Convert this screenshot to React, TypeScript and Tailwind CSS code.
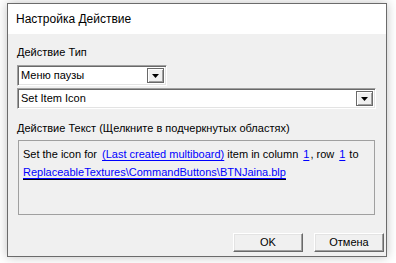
import React from 'react';

function Arrow() {
  return (
    <svg width="7" height="4" viewBox="0 0 7 4">
      <path d="M0 0h7L3.5 4z" fill="#000" />
    </svg>
  );
}

function Combo({ value, width }: { value: string; width: string }) {
  return (
    <div
      className={`${width} h-[21px] flex items-stretch bg-white border-t border-l border-[#a0a0a0] border-r border-b border-r-white border-b-white shadow-[inset_1px_1px_0_#696969,inset_-1px_-1px_0_#e3e3e3]`}
    >
      <div className="flex-1 flex items-center pl-[3px] text-[11px] text-black">{value}</div>
      <div className="w-[17px] my-[2px] mr-[2px] flex items-center justify-center bg-[#f0f0f0] border border-[#696969] shadow-[inset_1px_1px_0_#ffffff,inset_-1px_-1px_0_#a0a0a0]">
        <Arrow />
      </div>
    </div>
  );
}

function Btn({ label }: { label: string }) {
  return (
    <button className="w-[70px] h-[19px] flex items-center justify-center bg-[#f0f0f0] text-[11px] text-black border-t border-l border-white border-r border-b border-r-[#696969] border-b-[#696969] shadow-[inset_-1px_-1px_0_#a0a0a0,inset_1px_1px_0_#e3e3e3]">
      {label}
    </button>
  );
}

export default function App() {
  return (
    <div className="w-[396px] h-[263px] bg-white" style={{ fontFamily: '"Liberation Sans", Arial, sans-serif' }}>
      <div className="ml-[7px] mt-[3px] w-[380px] h-[254px] border border-[#6b6b6b] bg-[#f0f0f0] flex flex-col shadow-[0_0_10px_rgba(0,0,0,0.25)]">
        {/* title bar */}
        <div className="h-[30px] bg-white flex items-center pl-[8px] text-[12px] text-black">
          Настройка Действие
        </div>

        <div className="flex flex-col pl-[9px] pr-[9px]">
          <div className="mt-[12px] h-[13px] leading-[13px] text-[11px] text-black">Действие Тип</div>
          <div className="mt-[6px]">
            <Combo value="Меню паузы" width="w-[150px]" />
          </div>
          <div className="mt-[2px]">
            <Combo value="Set Item Icon" width="w-[359px]" />
          </div>
          <div className="mt-[13px] h-[13px] leading-[13px] text-[11px] text-black">
            Действие Текст (Щелкните в подчеркнутых областях)
          </div>
          <div className="mt-[5px] ml-[1px] w-[357px] h-[75px] border border-[#a0a0a0] bg-[#f0f0f0] px-[4px] pt-[4px] text-[11px] text-black leading-[18px]">
            <div className="whitespace-nowrap">
              Set the icon for
              <span className="ml-[5px] text-[#0000ff] underline underline-offset-2">(Last created multiboard)</span> item in column
              <span className="ml-[5px] text-[#0000ff] underline underline-offset-2">1</span>
              <span className="ml-[1px]">, row</span>
              <span className="ml-[5px] text-[#0000ff] underline underline-offset-2">1</span>
              <span className="ml-[4px]">to</span>
            </div>
            <div className="whitespace-nowrap">
              <span className="text-[#0000ff] underline underline-offset-2 border-b border-black pb-[1px]">
                ReplaceableTextures\CommandButtons\BTNJaina.blp
              </span>
            </div>
          </div>
          <div className="mt-[18px] flex justify-end gap-[11px] mr-[-7px]">
            <Btn label="OK" />
            <Btn label="Отмена" />
          </div>
        </div>
      </div>
    </div>
  );
}
